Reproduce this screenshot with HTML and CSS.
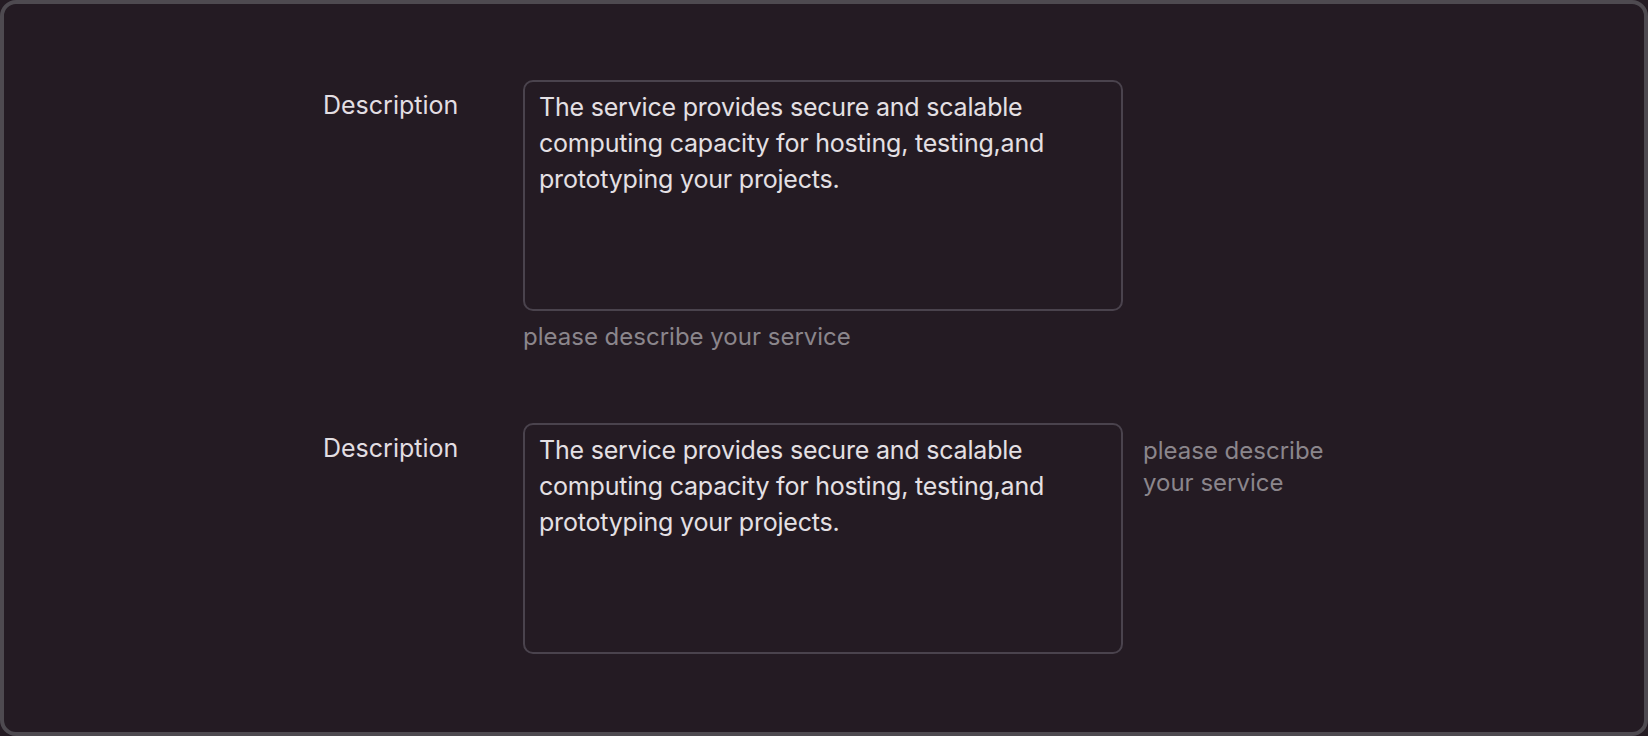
FILE: index.html
```html
<!DOCTYPE html>
<html lang="en">
<head>
    <meta charset="UTF-8">
    <meta name="viewport" content="width=device-width, initial-scale=1.0">
    <title>Description fields</title>
    <link rel="stylesheet" href="styles.css">
</head>
<body>
    <div class="frame">
        <div class="form">
            <div class="row">
                <label class="row-label" for="desc-1">Description</label>
                <div class="field">
                    <textarea id="desc-1" class="area">The service provides secure and scalable computing capacity for hosting, testing,and prototyping your projects.</textarea>
                    <div class="hint">please describe your service</div>
                </div>
            </div>

            <div class="row row-second">
                <label class="row-label" for="desc-2">Description</label>
                <div class="field field-side">
                    <textarea id="desc-2" class="area">The service provides secure and scalable computing capacity for hosting, testing,and prototyping your projects.</textarea>
                    <div class="hint hint-side">please describe your service</div>
                </div>
            </div>
        </div>
    </div>
</body>
</html>
```

FILE: styles.css
```css
html, body {
    margin: 0;
    height: 100%;
    background-color: #241b23;
}

body {
    font-family: Inter, "Open Sans", Arial, sans-serif;
    color: #e6e2e6;
}

.frame {
    box-sizing: border-box;
    height: 736px;
    border: 4px solid #4e4a50;
    border-radius: 16px;
    background-color: #241b23;
    overflow: hidden;
}

.form {
    display: flex;
    flex-direction: column;
    padding: 76px 0 0 319px;
}

.row {
    display: flex;
    align-items: flex-start;
}

.row-second {
    margin-top: 70px;
}

.row-label {
    width: 200px;
    flex-shrink: 0;
    font-size: 25px;
    line-height: 36px;
    padding-top: 7px;
    color: #e2dee2;
}

.field {
    display: flex;
    flex-direction: column;
}

.field-side {
    flex-direction: row;
    align-items: flex-start;
}

.area {
    box-sizing: border-box;
    width: 600px;
    height: 231px;
    margin: 0;
    padding: 7px 14px;
    border: 2px solid #4a434d;
    border-radius: 10px;
    background: transparent;
    color: #e4e0e4;
    font-family: Inter, "Open Sans", Arial, sans-serif;
    font-size: 25px;
    letter-spacing: -0.2px;
    line-height: 36px;
    resize: none;
    outline: none;
}

.hint {
    margin-top: 10px;
    font-size: 24px;
    line-height: 32px;
    color: #8b868c;
}

.hint-side {
    width: 200px;
    margin: 12px 0 0 20px;
}
```
